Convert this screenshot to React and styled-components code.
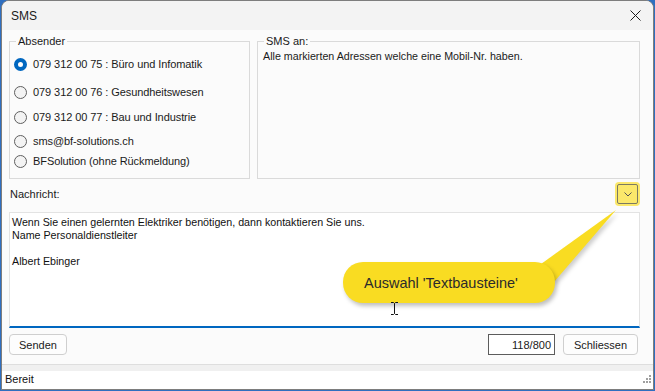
import styled, { createGlobalStyle } from 'styled-components';

const GlobalStyle = createGlobalStyle`
  html, body {
    margin: 0;
    padding: 0;
    background: #2f6fc0;
  }
  body {
    font-family: "Liberation Sans", Arial, sans-serif;
    font-size: 11px;
    color: #000;
  }
`;

const Window = styled.div`
  position: relative;
  width: 651px;
  height: 388px;
  margin-left: 1px;
  border: 1px solid #7d7d7d;
  border-radius: 8px 8px 0 0;
  background: #fbfbfb;
  display: flex;
  flex-direction: column;
  overflow: hidden;
`;

const TitleBar = styled.div`
  height: 29px;
  flex: none;
  display: flex;
  align-items: center;
  justify-content: space-between;
  padding: 0 10px 0 9px;
  background: #f3f3f3;
  font-size: 12px;
  color: #1a1a1a;
`;

const CloseBtn = styled.button`
  width: 16px;
  height: 16px;
  padding: 0;
  border: none;
  background: transparent;
  display: flex;
  align-items: center;
  justify-content: center;
`;

const Body = styled.div`
  flex: 1;
  display: flex;
  flex-direction: column;
  padding: 5px 13px 0 7px;
`;

const TopRow = styled.div`
  display: flex;
  gap: 7px;
  height: 144px;
`;

const Group = styled.fieldset`
  margin: 0;
  padding: 0 6px 0 5px;
  border: 1px solid #dadada;
  width: ${(p) => p.$w}px;
  box-sizing: border-box;
  flex: ${(p) => (p.$w ? 'none' : '1')};
  min-width: 0;
  height: 144px;

  legend {
    margin-left: 1px;
    padding: 0 2px;
    font-size: 11px;
    line-height: 13px;
    color: #1a1a1a;
  }
`;

const Option = styled.label`
  display: flex;
  align-items: center;
  gap: 6px;
  height: 20px;
  margin-top: ${(p) => p.$top}px;
  margin-left: -1px;
  color: #1a1a1a;
  letter-spacing: -0.08px;
`;

const Radio = styled.span`
  width: 13px;
  height: 13px;
  box-sizing: border-box;
  border-radius: 50%;
  flex: none;
  border: ${(p) => (p.$on ? '4px solid #0067c0' : '1px solid #5f5f5f')};
  background: ${(p) => (p.$on ? '#fff' : '#f3f3f3')};
`;

const Recipients = styled.div`
  margin-top: 2px;
  font-size: 10.7px;
  color: #1a1a1a;
`;

const MessageHead = styled.div`
  height: 22px;
  margin-top: 4px;
  display: flex;
  align-items: center;
  justify-content: space-between;
  padding-left: 1px;
  color: #1a1a1a;
`;

const PickBtn = styled.button`
  width: 21px;
  height: 20px;
  padding: 0;
  margin-right: 2px;
  border: 1px solid #7b7a62;
  border-radius: 2px;
  background: #fbe86b;
  box-shadow: 0 0 0 2px #fbe86b;
  display: flex;
  align-items: center;
  justify-content: center;
`;

const Message = styled.textarea`
  margin-top: 7px;
  height: 116px;
  box-sizing: border-box;
  resize: none;
  border: 1px solid #e3e3e3;
  border-bottom: 2px solid #0067c0;
  background: #fff;
  padding: 3px 2px;
  font-family: "Liberation Sans", Arial, sans-serif;
  font-size: 10.7px;
  line-height: 13px;
  color: #111;
  outline: none;
`;

const ActionRow = styled.div`
  margin-top: 6px;
  height: 21px;
  display: flex;
  align-items: center;
  gap: 8px;
  padding-right: 2px;
`;

const Button = styled.button`
  width: ${(p) => p.$w}px;
  height: 21px;
  box-sizing: border-box;
  border: 1px solid #cfcfcf;
  border-radius: 4px;
  background: #fdfdfd;
  font-family: inherit;
  font-size: 11px;
  color: #1a1a1a;
  padding: 0;
`;

const Spacer = styled.div`
  flex: 1;
`;

const Counter = styled.div`
  width: 67px;
  height: 21px;
  box-sizing: border-box;
  border: 1px solid #5c5c5c;
  background: #fff;
  display: flex;
  align-items: center;
  justify-content: flex-end;
  padding-right: 3px;
  color: #1a1a1a;
`;

const Divider = styled.div`
  margin-top: 9px;
  height: 6px;
  border-top: 1px solid #dedede;
  background: #f0f0f0;
`;

const StatusBar = styled.div`
  height: 19px;
  display: flex;
  align-items: center;
  justify-content: space-between;
  padding: 0 2px 2px 3px;
  box-sizing: border-box;
  background: #fff;
  color: #111;
`;

const Callout = styled.div`
  position: absolute;
  left: 341px;
  top: 261px;
  width: 212px;
  height: 41px;
  border-radius: 20px;
  background: #f9dc22;
  box-shadow: 2px 3px 4px rgba(0, 0, 0, 0.25);
  display: flex;
  align-items: center;
  padding-left: 21px;
  box-sizing: border-box;
  font-size: 14.5px;
  color: #2b2b2b;
`;

const Tail = styled.svg`
  position: absolute;
  left: 530px;
  top: 205px;
  filter: drop-shadow(2px 3px 2px rgba(0, 0, 0, 0.2));
`;

const Cursor = styled.svg`
  position: absolute;
  left: 388px;
  top: 301px;
`;

const senders = [
  { text: '079 312 00 75 : Büro und Infomatik', top: 6, on: true },
  { text: '079 312 00 76 : Gesundheitswesen', top: 8 },
  { text: '079 312 00 77 : Bau und Industrie', top: 5 },
  { text: 'sms@bf-solutions.ch', top: 4 },
  { text: 'BFSolution (ohne Rückmeldung)', top: 0 },
];

const messageText =
  'Wenn Sie einen gelernten Elektriker benötigen, dann kontaktieren Sie uns.\nName Personaldienstleiter\n\nAlbert Ebinger';

export default function App() {
  return (
    <>
      <GlobalStyle />
      <Window>
        <TitleBar>
          <span>SMS</span>
          <CloseBtn type="button">
            <svg width="11" height="11" viewBox="0 0 11 11">
              <path d="M0.5 0.5 L10.5 10.5 M10.5 0.5 L0.5 10.5" stroke="#1a1a1a" strokeWidth="1" />
            </svg>
          </CloseBtn>
        </TitleBar>

        <Body>
          <TopRow>
            <Group $w={241}>
              <legend>Absender</legend>
              {senders.map((s) => (
                <Option key={s.text} $top={s.top}>
                  <Radio $on={s.on} />
                  {s.text}
                </Option>
              ))}
            </Group>
            <Group>
              <legend>SMS an:</legend>
              <Recipients>Alle markierten Adressen welche eine Mobil-Nr. haben.</Recipients>
            </Group>
          </TopRow>

          <MessageHead>
            <span>Nachricht:</span>
            <PickBtn type="button">
              <svg width="8" height="5" viewBox="0 0 8 5">
                <path d="M0.5 0.5 L4 4 L7.5 0.5" fill="none" stroke="#555" strokeWidth="1" />
              </svg>
            </PickBtn>
          </MessageHead>

          <Message defaultValue={messageText} />

          <ActionRow>
            <Button type="button" $w={58}>Senden</Button>
            <Spacer />
            <Counter>118/800</Counter>
            <Button type="button" $w={75}>Schliessen</Button>
          </ActionRow>
        </Body>

        <Divider />
        <StatusBar>
          <span>Bereit</span>
          <svg width="8" height="8" viewBox="0 0 8 8">
            <g fill="#a0a0a0">
              <rect x="6" y="0" width="2" height="2" />
              <rect x="3" y="3" width="2" height="2" />
              <rect x="6" y="3" width="2" height="2" />
              <rect x="0" y="6" width="2" height="2" />
              <rect x="3" y="6" width="2" height="2" />
              <rect x="6" y="6" width="2" height="2" />
            </g>
          </svg>
        </StatusBar>

        <Tail width="90" height="80" viewBox="0 0 90 80">
          <polygon points="9,58 84,4 22,76" fill="#f9dc22" />
        </Tail>
        <Callout>Auswahl 'Textbausteine'</Callout>
        <Cursor width="9" height="13" viewBox="0 0 9 13">
          <path d="M1 0.5 H3.5 L4.5 1.5 L5.5 0.5 H8 M4.5 1.5 V11.5 M1 12.5 H3.5 L4.5 11.5 L5.5 12.5 H8" fill="none" stroke="#111" strokeWidth="1" />
        </Cursor>
      </Window>
    </>
  );
}
